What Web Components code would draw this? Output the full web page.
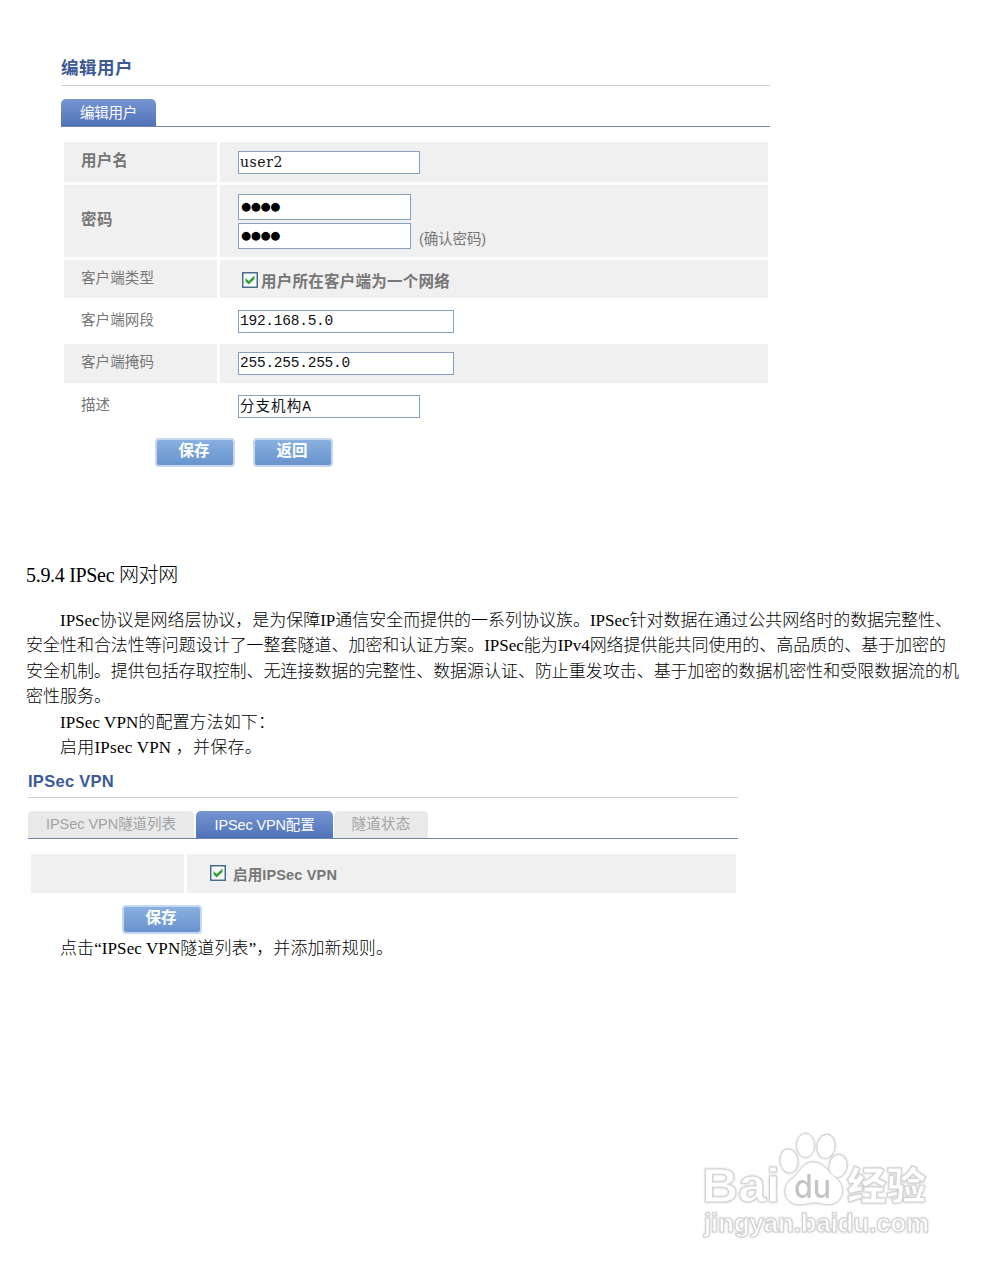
<!DOCTYPE html>
<html lang="zh-CN">
<head>
<meta charset="utf-8">
<title>IPSec VPN</title>
<style>
  body {
    margin: 0;
    background: #fff;
    color: #000;
    font-family: "Liberation Sans", "Noto Sans CJK SC", sans-serif;
  }
</style>
</head>
<body>
<manual-page>
  <config-panel style="margin: 54px 0 0 61px; width: 709px" heading="编辑用户" heading-width="72">
    <panel-tab slot="tabs" active style="width: 95px"><fit-text w="57">编辑用户</fit-text></panel-tab>
    <form-row style="height: 40px" bold shaded>
      <fit-text slot="label" w="47">用户名</fit-text>
      <text-field w="182" serif><fit-text w="43">user2</fit-text></text-field>
    </form-row>
    <form-row style="height: 72px" bold shaded>
      <fit-text slot="label" w="32">密码</fit-text>
      <password-pair></password-pair>
    </form-row>
    <form-row style="height: 38px" shaded>
      <fit-text slot="label" w="73">客户端类型</fit-text>
      <check-option style="margin: 2px 0 0 4px"><fit-text w="189">用户所在客户端为一个网络</fit-text></check-option>
    </form-row>
    <form-row style="height: 40px">
      <fit-text slot="label" w="73">客户端网段</fit-text>
      <text-field w="216"><fit-text w="93">192.168.5.0</fit-text></text-field>
    </form-row>
    <form-row style="height: 39px" shaded>
      <fit-text slot="label" w="73">客户端掩码</fit-text>
      <text-field w="216"><fit-text w="110">255.255.255.0</fit-text></text-field>
    </form-row>
    <form-row style="height: 40px">
      <fit-text slot="label" w="29">描述</fit-text>
      <text-field w="182" cjk><fit-text w="72">分支机构A</fit-text></text-field>
    </form-row>
    <push-button slot="actions"><fit-text w="31">保存</fit-text></push-button>
    <push-button slot="actions"><fit-text w="31">返回</fit-text></push-button>
  </config-panel>

  <doc-text style="margin-top: 96px">
    <fit-text slot="heading" w="152">5.9.4 IPSec 网对网</fit-text>
    <fit-text indent w="892">IPSec协议是网络层协议，是为保障IP通信安全而提供的一系列协议族。IPSec针对数据在通过公共网络时的数据完整性、</fit-text>
    <fit-text w="920">安全性和合法性等问题设计了一整套隧道、加密和认证方案。IPSec能为IPv4网络提供能共同使用的、高品质的、基于加密的</fit-text>
    <fit-text w="933">安全机制。提供包括存取控制、无连接数据的完整性、数据源认证、防止重发攻击、基于加密的数据机密性和受限数据流的机</fit-text>
    <fit-text w="85">密性服务。</fit-text>
    <fit-text indent w="215">IPSec VPN的配置方法如下：</fit-text>
    <fit-text indent w="202">启用IPsec VPN ，并保存。</fit-text>
  </doc-text>

  <config-panel style="margin: 4px 0 0 28px" heading="IPSec VPN" heading-width="86" latin>
    <panel-tab slot="tabs" style="width: 166px"><fit-text w="130">IPSec VPN隧道列表</fit-text></panel-tab>
    <panel-tab slot="tabs" active style="width: 137px"><fit-text w="100">IPSec VPN配置</fit-text></panel-tab>
    <panel-tab slot="tabs" style="width: 94px; margin-left: -1px"><fit-text w="59">隧道状态</fit-text></panel-tab>
    <form-row style="height: 39px" shaded>
      <check-option gap style="margin: 0 0 0 5px"><fit-text w="104">启用IPSec VPN</fit-text></check-option>
    </form-row>
    <push-button slot="actions"><fit-text w="31">保存</fit-text></push-button>
  </config-panel>

  <doc-text style="margin-top: 2px">
    <fit-text indent w="333">点击“IPSec VPN隧道列表”，并添加新规则。</fit-text>
  </doc-text>

  <site-mark style="margin: 164px 0 0 696px"></site-mark>
</manual-page>

<script>
// Shared base: clone the markup of the class into an open shadow root.
class BaseElement extends HTMLElement {
  constructor() {
    super();
    this.attachShadow({ mode: 'open' });
    const tpl = document.createElement('template');
    tpl.innerHTML = this.constructor.markup;
    this.shadowRoot.appendChild(tpl.content.cloneNode(true));
  }
}

class ManualPage extends BaseElement {
  static markup = `
<style>
  :host {
    display: flex;
    flex-direction: column;
    width: 989px;
    height: 1280px;
    overflow: hidden;
  }
</style>
<slot></slot>
`;
}

// A single line spread over a fixed measure.
class FitText extends BaseElement {
  static markup = `
<style>
  :host {
    display: block;
    flex: none;
    white-space: nowrap;
  }
  :host([indent]) { margin-left: 34px; }
  span { display: block; width: max-content; }
</style>
<span><slot></slot></span>
`;
  // Spread (or tighten) the characters until the line fills its measure.
  fit() {
    const w = Number(this.getAttribute('w'));
    const span = this.shadowRoot.querySelector('span');
    const natural = span.getBoundingClientRect().width;
    const count = [...this.textContent].length;
    this.style.width = `${w}px`;
    span.style.letterSpacing = `${(w - natural) / count}px`;
  }
}

class ConfigPanel extends BaseElement {
  static markup = `
<style>
  :host { display: block; width: 710px; flex: none; }
  h2 {
    box-sizing: border-box;
    height: 32px;
    margin: 0;
    border-bottom: 1px solid #cfd0d2;
    color: #3d5a96;
    font-size: 17.5px;
    font-weight: bold;
    line-height: 28px;
  }
  :host([latin]) h2 { font-size: 16.5px; height: 33px; line-height: 32px; }
  .tabs {
    display: flex;
    gap: 2px;
    height: 27px;
    margin-top: 13px;
    border-bottom: 1.5px solid #7186ae;
  }
  .rows {
    display: flex;
    flex-direction: column;
    gap: 3px;
    margin: 15px 2px 0 3px;
  }
  .actions {
    display: flex;
    gap: 18px;
    margin: 12px 0 0 94px;
  }
</style>
<h2><fit-text></fit-text></h2>
<div class="tabs"><slot name="tabs"></slot></div>
<div class="rows"><slot></slot></div>
<div class="actions"><slot name="actions"></slot></div>
`;
  connectedCallback() {
    const title = this.shadowRoot.querySelector('fit-text');
    title.textContent = this.getAttribute('heading');
    title.setAttribute('w', this.getAttribute('heading-width'));
  }
}

class PanelTab extends BaseElement {
  static markup = `
<style>
  :host {
    display: flex;
    justify-content: center;
    box-sizing: border-box;
    height: 27px;
    border-radius: 5px 5px 0 0;
    background: #e9e9ea;
    color: #a3a3a5;
    font-size: 14.5px;
    line-height: 26px;
  }
  :host([active]) {
    background: linear-gradient(#7795d1, #4f72b9);
    color: #fff;
    line-height: 28px;
  }
</style>
<slot></slot>
`;
}

class FormRow extends BaseElement {
  static markup = `
<style>
  :host {
    display: grid;
    grid-template-columns: 153px 1fr;
    gap: 3px;
    color: #777;
    font-size: 14.5px;
  }
  div { display: flex; align-items: center; }
  :host([shaded]) div { background: #f0f0f0; }
  .label { padding: 0 0 6px 17px; }
  :host([bold]) .label { font-weight: bold; font-size: 15.5px; }
  .value { padding-left: 18px; }
</style>
<div class="label"><slot name="label"></slot></div>
<div class="value"><slot></slot></div>
`;
}

class TextField extends BaseElement {
  static markup = `
<style>
  :host {
    display: flex;
    align-items: center;
    box-sizing: border-box;
    height: 23px;
    padding: 0 0 1px 1px;
    border: 1px solid #86a0bd;
    background: #fff;
    color: #111;
    font: 14.5px "Liberation Mono", "Noto Sans CJK SC", monospace;
  }
  :host([serif]) { font-family: "DejaVu Serif", serif; font-size: 14px; }
  :host([cjk]) { padding-bottom: 4px; }
  :host([tall]) {
    height: 26px;
    padding: 0 0 2px 2px;
    color: #000;
    font: 11.5px "DejaVu Sans", sans-serif;
  }
</style>
<slot></slot>
`;
  connectedCallback() {
    this.style.width = `${this.getAttribute('w')}px`;
  }
}

class PasswordPair extends BaseElement {
  static markup = `
<style>
  :host { display: grid; gap: 3px; }
  div { display: flex; gap: 8px; }
  .hint { padding-top: 4px; }
</style>
<div><text-field tall w="173"><fit-text w="39">●●●●</fit-text></text-field></div>
<div><text-field tall w="173"><fit-text w="39">●●●●</fit-text></text-field><fit-text class="hint" w="67">(确认密码)</fit-text></div>
`;
}

class CheckOption extends BaseElement {
  static markup = `
<style>
  :host {
    display: flex;
    align-items: center;
    gap: 3px;
    font-size: 15.5px;
    font-weight: bold;
  }
  :host([gap]) { gap: 7px; font-size: 14.5px; }
  svg { flex: none; }
  slot { display: block; }
</style>
<svg width="16" height="16" viewBox="0 0 16 16">
  <rect x=".75" y=".75" width="14.5" height="14.5" fill="#f8faf7" stroke="#3f6389" stroke-width="1.4"/>
  <path d="M3.500 6 6.700 9 12.500 3.500V7L6.700 12.500 3.500 9.500Z" fill="#35a13a"/>
</svg>
<slot></slot>
`;
}

class PushButton extends BaseElement {
  static markup = `
<style>
  :host {
    display: flex;
    justify-content: center;
    box-sizing: border-box;
    width: 80px;
    height: 29px;
    border: 2px solid #c5d8ef;
    border-radius: 4px;
    background: linear-gradient(#88b0e0, #6993ce);
    color: #fff;
    font-size: 15.5px;
    font-weight: bold;
    line-height: 22px;
  }
  slot { display: block; margin-left: -2px; }
</style>
<slot></slot>
`;
}

class DocText extends BaseElement {
  static markup = `
<style>
  :host {
    display: block;
    flex: none;
    padding-left: 26px;
    font: 300 17px/25.5px "Liberation Serif", "Noto Sans CJK SC", serif;
  }
  ::slotted([slot="heading"]) {
    margin-bottom: 19px;
    font-size: 20px;
  }
</style>
<slot name="heading"></slot>
<slot></slot>
`;
}

class SiteMark extends BaseElement {
  static markup = `
<style>
  :host { display: block; width: 245px; height: 125px; flex: none; }
  svg { display: block; filter: drop-shadow(0 0 1px #ccc); }
  .bai { font: bold 49px "Liberation Sans", sans-serif; }
  .du { font: 500 32px Inter, sans-serif; }
  .name { font: 900 38px "Noto Sans CJK SC", sans-serif; }
  .url { font: bold 25px "Liberation Sans", sans-serif; }
</style>
<svg width="245" height="125" viewBox="696 1125 245 125" fill="#fff" stroke="#d2d2d2" stroke-width="1">
  <text class="bai" x="702" y="1202" textLength="78" lengthAdjust="spacingAndGlyphs">Bai</text>
  <ellipse cx="789" cy="1161" rx="9" ry="12" transform="rotate(-8 789 1161)"/>
  <ellipse cx="805.500" cy="1145.500" rx="9" ry="12"/>
  <ellipse cx="826" cy="1146.500" rx="9" ry="12" transform="rotate(8 826 1146.500)"/>
  <ellipse cx="838" cy="1166" rx="9" ry="11.500" transform="rotate(10 838 1166)"/>
  <path d="M813 1162C801 1162 800 1174 790 1180C783 1187 783 1198 792 1203C800 1207 807 1203 814 1203C822 1203 829 1207 837 1202C845 1195 844 1185 836 1178C827 1171 824 1162 813 1162Z"/>
  <text class="du" x="794" y="1198" textLength="37" lengthAdjust="spacingAndGlyphs" fill="#c4c4c4" stroke="none">du</text>
  <text class="name" x="847" y="1199" textLength="79" lengthAdjust="spacingAndGlyphs">经验</text>
  <text class="url" x="704" y="1232" textLength="225" lengthAdjust="spacingAndGlyphs">jingyan.baidu.com</text>
</svg>
`;
}

customElements.define('manual-page', ManualPage);
customElements.define('config-panel', ConfigPanel);
customElements.define('panel-tab', PanelTab);
customElements.define('form-row', FormRow);
customElements.define('text-field', TextField);
customElements.define('password-pair', PasswordPair);
customElements.define('check-option', CheckOption);
customElements.define('push-button', PushButton);
customElements.define('doc-text', DocText);
customElements.define('site-mark', SiteMark);
customElements.define('fit-text', FitText);

function fitAll(root) {
  for (const el of root.querySelectorAll('*')) {
    if (el.localName === 'fit-text') {
      el.fit();
    } else if (el.shadowRoot) {
      fitAll(el.shadowRoot);
    }
  }
}
fitAll(document);
</script>
</body>
</html>
